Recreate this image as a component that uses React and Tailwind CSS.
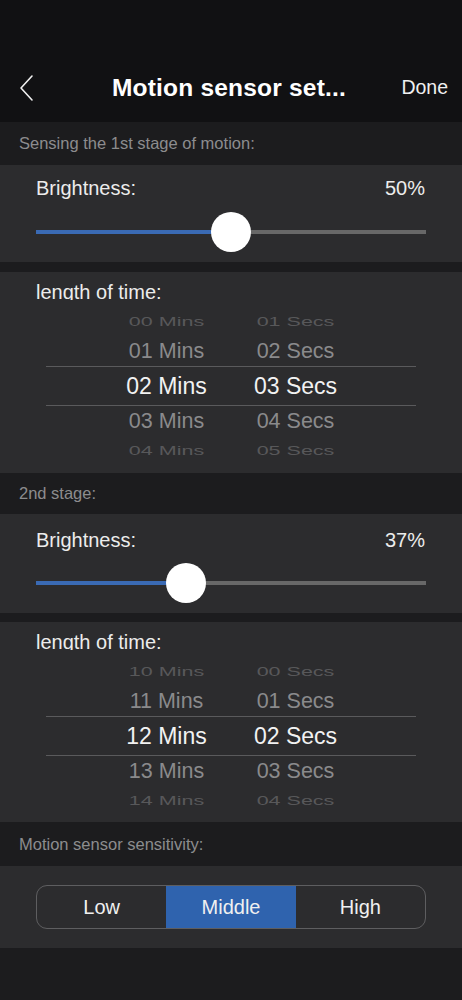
import React from "react";

const font = { fontFamily: '"Liberation Sans", Arial, sans-serif' };

function SectionLabel({ children, h }) {
  return (
    <div className={`flex items-center px-[19px] text-[16.5px] text-[#8c8c8e] ${h}`}>
      {children}
    </div>
  );
}

function BrightnessPanel({ value, h, pt, gap }) {
  return (
    <div className={`bg-[#2c2c2e] px-[36px] flex flex-col ${h} ${pt} ${gap}`}>
      <div className="flex items-center justify-between h-[24px] text-[20px] text-[#ececec]">
        <span>Brightness:</span>
        <span className="mr-[1px]">{value}%</span>
      </div>
      <div className="relative h-[40px]">
        <div className="absolute left-0 right-0 top-[18px] h-[4px] bg-[#686868]" />
        <div
          className="absolute left-0 top-[18px] h-[4px] bg-[#3a6ab4]"
          style={{ width: `calc(20px + ${value / 100} * (100% - 40px))` }}
        />
        <div
          className="absolute top-0 w-[40px] h-[40px] rounded-full bg-white -translate-x-1/2"
          style={{ left: `calc(20px + ${value / 100} * (100% - 40px))` }}
        />
      </div>
    </div>
  );
}

function Row({ m, s, cls, h }) {
  return (
    <div className={`flex justify-center items-center ${h}`}>
      <div className={`w-[129px] text-center ${cls}`}>{m} Mins</div>
      <div className={`w-[129px] text-center ${cls}`}>{s} Secs</div>
    </div>
  );
}

function LengthPanel({ mins, secs, h }) {
  const pad = (n) => String(n).padStart(2, "0");
  return (
    <div className={`bg-[#2c2c2e] px-[36px] ${h}`}>
      <div className="h-[28px] overflow-hidden pt-[8px]">
        <div className="h-[24px] leading-[24px] text-[20px] text-[#ececec]">length of time:</div>
      </div>
      <div className="mx-[10px] pt-[7px]">
        <Row m={pad(mins - 2)} s={pad(secs - 2)} h="h-[30px]" cls="text-[21.5px] text-[#58585a] scale-y-[0.6]" />
        <Row m={pad(mins - 1)} s={pad(secs - 1)} h="h-[29px]" cls="text-[21.5px] text-[#8a8a8c]" />
        <div className="border-t border-b border-[#5a5a5c] h-[40px] flex justify-center items-center">
          <div className="w-[129px] text-center text-[23px] text-[#f2f2f2]">{pad(mins)} Mins</div>
          <div className="w-[129px] text-center text-[23px] text-[#f2f2f2]">{pad(secs)} Secs</div>
        </div>
        <Row m={pad(mins + 1)} s={pad(secs + 1)} h="h-[31px]" cls="text-[21.5px] text-[#8a8a8c]" />
        <Row m={pad(mins + 2)} s={pad(secs + 2)} h="h-[28px]" cls="text-[21.5px] text-[#58585a] scale-y-[0.6]" />
      </div>
    </div>
  );
}

export default function App() {
  return (
    <div className="w-full min-h-[1000px] bg-[#1c1c1e]" style={font}>
      <div className="bg-[#111113] pt-[66px] pb-[12px]">
        <div className="relative h-[44px] flex items-center justify-center">
          <svg className="absolute left-[18px] top-[8px]" width="18" height="28" viewBox="0 0 18 28" fill="none">
            <path d="M14 2 L3 14 L14 26" stroke="#f0f0f0" strokeWidth="1.6" strokeLinecap="round" strokeLinejoin="round" />
          </svg>
          <div className="text-[24.5px] font-bold text-white tracking-[0.2px] ml-[-4px]">Motion sensor set...</div>
          <div className="absolute right-[14px] text-[19.5px] text-[#f0f0f0]">Done</div>
        </div>
      </div>

      <SectionLabel h="h-[43px]">Sensing the 1st stage of motion:</SectionLabel>
      <BrightnessPanel value={50} h="h-[97px]" pt="pt-[11px]" gap="gap-[12px]" />
      <div className="h-[10px]" />
      <LengthPanel mins={2} secs={3} h="h-[201px]" />

      <SectionLabel h="h-[41px]">2nd stage:</SectionLabel>
      <BrightnessPanel value={37} h="h-[99px]" pt="pt-[14px]" gap="gap-[11px]" />
      <div className="h-[9px]" />
      <LengthPanel mins={12} secs={2} h="h-[200px]" />

      <SectionLabel h="h-[44px]">Motion sensor sensitivity:</SectionLabel>
      <div className="bg-[#2c2c2e] h-[82px] px-[36px] pt-[19px]">
        <div className="flex h-[44px] rounded-[11px] border border-[#5e5e60] overflow-hidden text-[20px] text-[#f0f0f0]">
          <div className="flex-1 flex items-center justify-center">Low</div>
          <div className="flex-1 flex items-center justify-center bg-[#2f63ae]">Middle</div>
          <div className="flex-1 flex items-center justify-center">High</div>
        </div>
      </div>
    </div>
  );
}
